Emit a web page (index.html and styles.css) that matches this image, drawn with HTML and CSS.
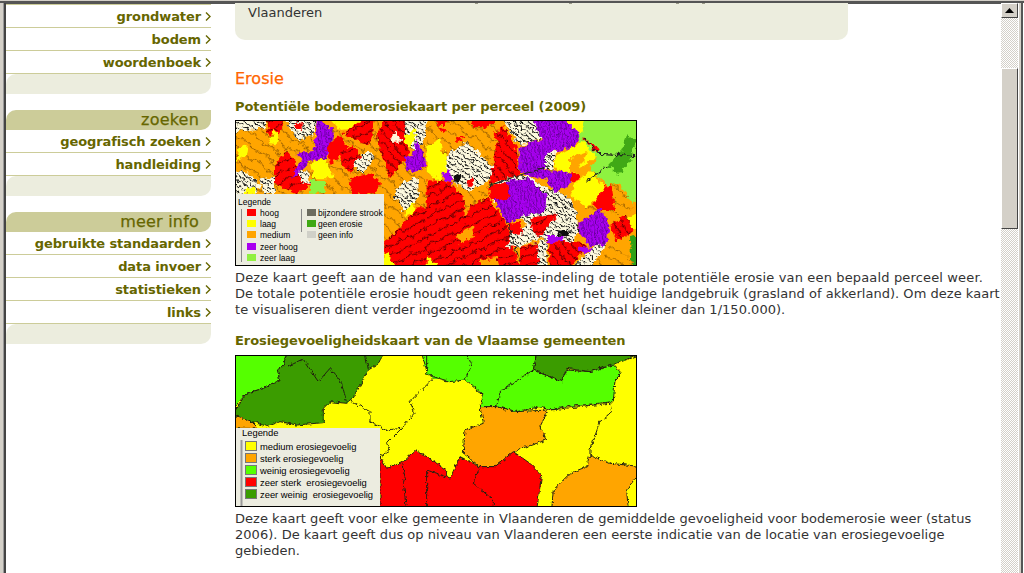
FILE: index.html
```html
<!DOCTYPE html>
<html lang="nl">
<head>
<meta charset="utf-8">
<title>Erosie</title>
<link rel="stylesheet" href="styles.css">
</head>
<body>
<svg class="defs" width="0" height="0" aria-hidden="true">
  <defs>
    <filter id="rough" x="-5%" y="-5%" width="110%" height="110%"><feTurbulence type="fractalNoise" baseFrequency=".07" numOctaves="2" seed="4"/><feDisplacementMap in="SourceGraphic" scale="22" xChannelSelector="R" yChannelSelector="G"/></filter>
    <filter id="jag" x="-5%" y="-5%" width="110%" height="110%"><feTurbulence type="fractalNoise" baseFrequency=".09" numOctaves="2" seed="7"/><feDisplacementMap in="SourceGraphic" scale="14" xChannelSelector="R" yChannelSelector="G"/></filter>
    <pattern id="red" width="60" height="52" patternUnits="userSpaceOnUse" patternTransform="rotate(-25)"><rect width="60" height="52" fill="#f00"/><path d="M0 13Q15 5 30 13T60 13M0 39Q15 31 30 39T60 39" fill="none" stroke="#300" stroke-width="2.600"/></pattern>
    <pattern id="red2" width="60" height="44" patternUnits="userSpaceOnUse" patternTransform="rotate(50)"><rect width="60" height="44" fill="#f00"/><path d="M0 11Q15 3 30 11T60 11M0 33Q15 25 30 33T60 33" fill="none" stroke="#300" stroke-width="2.600"/></pattern>
    <pattern id="org" width="70" height="30" patternUnits="userSpaceOnUse" patternTransform="rotate(35)"><rect width="70" height="30" fill="#ffa500"/><path d="M0 10Q18 0 35 10T70 10" fill="none" stroke="#442200" stroke-width="1.800"/></pattern>
    <pattern id="pur" width="30" height="11" patternUnits="userSpaceOnUse" patternTransform="rotate(80)"><rect width="30" height="11" fill="#a800f0"/><path d="M0 4Q8 1 15 4T30 4" fill="none" stroke="#300050" stroke-width="1.800"/></pattern>
    <pattern id="wht" width="13" height="13" patternUnits="userSpaceOnUse" patternTransform="rotate(35)"><rect width="13" height="13" fill="#fffbe0"/><path d="M0 4H13" stroke="#111" stroke-width="3"/></pattern>
  </defs>
</svg>
<div class="window">
  <div class="frame-left"></div>
  <div class="page">
    <nav class="sidebar">
      <ul class="menu menu-first">
        <li><a>grondwater<svg class="chev" width="6" height="9" viewBox="0 0 6 9"><path d="M1 .5 5 4.5 1 8.5" /></svg></a></li>
        <li><a>bodem<svg class="chev" width="6" height="9" viewBox="0 0 6 9"><path d="M1 .5 5 4.5 1 8.5" /></svg></a></li>
        <li><a>woordenboek<svg class="chev" width="6" height="9" viewBox="0 0 6 9"><path d="M1 .5 5 4.5 1 8.5" /></svg></a></li>
      </ul>
      <div class="menu-foot"></div>
      <h3 class="menu-head">zoeken</h3>
      <ul class="menu">
        <li><a>geografisch zoeken<svg class="chev" width="6" height="9" viewBox="0 0 6 9"><path d="M1 .5 5 4.5 1 8.5" /></svg></a></li>
        <li><a>handleiding<svg class="chev" width="6" height="9" viewBox="0 0 6 9"><path d="M1 .5 5 4.5 1 8.5" /></svg></a></li>
      </ul>
      <div class="menu-foot"></div>
      <h3 class="menu-head">meer info</h3>
      <ul class="menu">
        <li><a>gebruikte standaarden<svg class="chev" width="6" height="9" viewBox="0 0 6 9"><path d="M1 .5 5 4.5 1 8.5" /></svg></a></li>
        <li><a>data invoer<svg class="chev" width="6" height="9" viewBox="0 0 6 9"><path d="M1 .5 5 4.5 1 8.5" /></svg></a></li>
        <li><a>statistieken<svg class="chev" width="6" height="9" viewBox="0 0 6 9"><path d="M1 .5 5 4.5 1 8.5" /></svg></a></li>
        <li><a>links<svg class="chev" width="6" height="9" viewBox="0 0 6 9"><path d="M1 .5 5 4.5 1 8.5" /></svg></a></li>
      </ul>
      <div class="menu-foot"></div>
    </nav>
    <main class="content">
      <div class="intro">Vlaanderen</div>
      <h1 class="title">Erosie</h1>
      <h2 class="subtitle">Potentiële bodemerosiekaart per perceel (2009)</h2>
      <svg class="map map-one" width="402" height="146" viewBox="0 0 400 144">
        <rect width="400" height="144" fill="#ffa500"/>
        <g filter="url(#rough)" transform="translate(-6 -6) scale(.3333)">
          <rect x="-10" y="-10" width="660" height="480" fill="url(#org)"/>
          <path fill="url(#wht)" d="M10 10H115L105 40 60 45 10 50Z"/>
          <path fill="url(#red)" d="M115 10H165L150 60 130 65 112 50Z"/>
          <path fill="url(#wht)" d="M165 10H265L250 60 205 75 180 45Z"/>
          <path fill="#f00" d="M190 22 215 20 215 45 195 40Z"/>
          <path fill="#ff0" d="M25 100 50 90 45 125 20 135Z"/>
          <path fill="url(#wht)" d="M10 165 60 175 90 215 80 238H10Z"/>
          <path fill="#ff0" d="M50 220 75 215 80 238H40Z"/>
          <path fill="#ff0" d="M130 45 148 52 140 88 120 85Z"/>
          <path fill="url(#wht)" d="M90 190 135 185 135 238H100Z"/>
          <path fill="url(#red)" d="M135 150 170 105 205 160 240 210 200 236 135 205Z"/>
          <path fill="url(#wht)" d="M205 165 235 170 240 205 215 210Z"/>
          <path fill="url(#pur)" d="M185 192 215 130 200 115 250 108 265 10 312 50 290 128 240 140Z"/>
          <path fill="#ff0" d="M240 145 285 130 312 190 250 190Z"/>
          <path fill="#8ef240" d="M240 195 285 195 285 236H240Z"/>
          <path fill="#f00" d="M290 90 330 62 358 110 320 130 300 150Z"/>
          <path fill="url(#red)" d="M330 110 370 90 395 130 360 170 335 150Z"/>
          <path fill="url(#wht)" d="M370 145 415 105 430 130 395 180Z"/>
          <path fill="#ff0" d="M300 10H400L380 40 330 45Z"/>
          <path fill="url(#red)" d="M340 55 400 10 435 10 420 90 395 85Z"/>
          <path fill="url(#red2)" d="M440 50 470 10H535L535 125 480 190 450 110Z"/>
          <path fill="#fff6d8" d="M480 65 500 48 515 80H490Z"/>
          <path fill="#f00" d="M365 190 420 175 455 205 430 238H360Z"/>
          <path fill="url(#wht)" d="M520 10H640V70L590 60 560 110 530 90Z"/>
          <path fill="url(#pur)" d="M520 125 548 120 560 70 590 150 560 170 530 165Z"/>
          <path fill="#ff0" d="M530 60 560 40 545 95 520 85Z"/>
          <path fill="url(#wht)" d="M520 200 560 190 565 250 520 290 490 235Z"/>
          <path fill="#ff0" d="M530 280 555 260 550 295 525 305Z"/>
          <path fill="url(#red)" d="M460 385 510 340 560 280 640 280V460H460Z"/>
          <path fill="#ff0" d="M460 400 500 460H460Z"/>
        </g>
        <g filter="url(#rough)" transform="translate(194 -6) scale(.3333)">
          <path fill="url(#org)" d="M-10 10H200V110L170 150 100 90 40 120-10 100Z"/>
          <path fill="#f00" d="M20 10H60L50 30 25 30ZM120 10H200L170 38 130 35ZM80 62 100 65 92 85 75 78ZM25 35 50 45 35 55Z"/>
          <path fill="#ff0" d="M-10 95 30 70 40 110 60 150 30 200-10 170Z"/>
          <path fill="url(#wht)" d="M50 120 110 80 190 155 180 195 120 230 80 210 50 170Z"/>
          <path fill="#a800f0" d="M35 175 60 165 65 205 45 195Z"/>
          <path fill="#111" d="M70 185 95 175 90 205 70 200Z"/>
          <path fill="#f00" d="M105 195 130 190 130 212 110 212Z"/>
          <path fill="url(#red2)" d="M190 130 200 80 190 55 220 30 260 100 270 180 200 200 180 210Z"/>
          <path fill="url(#wht)" d="M215 10H310L340 70 270 90 240 50Z"/>
          <path fill="url(#pur)" d="M310 10H405L460 60 420 100 370 110 345 165 425 170 425 205 375 235 345 190 300 185 270 170 265 100 300 80 335 75Z"/>
          <path fill="url(#wht)" d="M345 115 375 110 370 165 345 160Z"/>
          <path fill="#ff0" d="M405 10H490L460 65 430 40Z"/>
          <path fill="#8ef240" d="M470 10H630V212L610 270 570 225 530 210 480 165 500 125 445 75Z"/>
          <path fill="#40a814" d="M590 60 618 78 600 140 565 180 535 150 575 105Z"/>
          <path fill="#ff0" d="M420 100 460 78 500 125 440 165 425 175 375 160 375 125Z"/>
          <path fill="#ffa500" d="M420 130 475 110 440 175 420 170Z"/>
          <path fill="#f00" d="M455 70 480 80 510 105 500 112Z"/>
          <path fill="#f00" d="M425 175 450 175 440 200 420 205Z"/>
          <path fill="#ff0" d="M440 200 480 165 525 215 525 235 470 275 420 240Z"/>
          <path fill="url(#org)" d="M525 215 570 205 610 270 600 290 550 300 530 290 475 290 470 275 530 240Z"/>
          <path fill="#f00" d="M525 215 545 210 555 285 510 285 490 270Z"/>
          <path fill="#ff0" d="M590 310 630 290V340L600 345Z"/>
          <path fill="url(#pur)" d="M445 325 510 280 540 320 530 385 480 395 445 350Z"/>
          <path fill="url(#red2)" d="M540 330 590 300 610 350 560 380Z"/>
          <path fill="#2fa014" d="M600 365 630 360V460H605Z"/>
          <path fill="url(#org)" d="M480 460 550 380 605 440 620 460Z"/>
          <path fill="url(#wht)" d="M200 200 235 190 270 180 300 185 350 220 410 240 440 290 445 345 430 385 350 375 320 365 280 320 235 270 190 260Z"/>
          <path fill="url(#pur)" d="M190 250 235 195 295 190 350 240 345 290 290 300 230 325Z"/>
          <path fill="#f00" d="M170 215 230 205 240 250 185 258Z"/>
          <path fill="url(#red)" d="M-10 195 60 200 105 250 170 240 225 320 240 360 270 460H-10Z"/>
          <path fill="url(#org)" d="M100 240 125 230 180 225 175 250 125 270 105 305Z"/>
          <path fill="#ffa500" d="M80 360 125 335 135 365 90 385Z"/>
          <path fill="#ff0" d="M-10 420 30 460H-10Z"/>
          <path fill="url(#wht)" d="M240 360 300 320 350 360 270 395 230 400Z"/>
          <path fill="url(#red)" d="M300 310 385 295 330 365 310 350Z"/>
          <path fill="#f00" d="M230 325 270 320 280 355 240 358Z"/>
          <path fill="#a800f0" d="M350 360 400 360 400 382 352 385Z"/>
          <path fill="#111" d="M375 345 425 350 415 362 385 358Z"/>
          <path fill="url(#wht)" d="M280 395 350 375 350 460H270Z"/>
          <path fill="url(#red)" d="M270 395 320 385 330 460H270Z"/>
          <path fill="url(#red2)" d="M355 385 440 378 470 395 420 460H360Z"/>
          <path fill="#a800f0" d="M445 395 495 400 490 415 450 410Z"/>
          <path fill="url(#wht)" d="M500 390 530 385 480 460 420 460Z"/>
          <path fill="#ffa500" d="M150 435 200 425 210 460H145Z"/>
          <path d="M175 215 270 180 345 160M460 70 510 115 618 122M470 200 535 150M230 320 270 440" fill="none" stroke="#222" stroke-width="3.500"/>
        </g>
        <g class="legend">
          <rect x="0" y="73" width="148" height="71" fill="#ecece0"/>
          <path d="M5.500 88V141M65.500 88V111" stroke="#888" stroke-width="1"/>
          <rect x="11" y="88" width="9" height="7" fill="#f00"/>
          <rect x="11" y="99" width="9" height="7" fill="#ff0"/>
          <rect x="11" y="110" width="9" height="7" fill="#ffa500"/>
          <rect x="11" y="122" width="9" height="7" fill="#a800f0"/>
          <rect x="11" y="133" width="9" height="7" fill="#90f040"/>
          <rect x="71" y="88" width="9" height="7" fill="#6c6c60"/>
          <rect x="71" y="99" width="9" height="7" fill="#40a814"/>
          <rect x="71" y="110" width="9" height="7" fill="#d0d0c8"/>
          <text x="2" y="84">Legende</text>
          <text x="24" y="95">hoog</text>
          <text x="24" y="106">laag</text>
          <text x="24" y="117">medium</text>
          <text x="24" y="129">zeer hoog</text>
          <text x="24" y="140">zeer laag</text>
          <text x="82" y="95">bijzondere strook</text>
          <text x="82" y="106">geen erosie</text>
          <text x="82" y="117">geen info</text>
        </g>
      </svg>
      <p class="text"><span class="wide">Deze kaart geeft aan de hand van een klasse-indeling de totale potentiële erosie van een bepaald perceel weer.</span><br>De totale potentiële erosie houdt geen rekening met het huidige landgebruik (grasland of akkerland). Om deze kaart<br>te visualiseren dient verder ingezoomd in te worden (schaal kleiner dan 1/150.000).</p>
      <h2 class="subtitle subtitle-next">Erosiegevoeligheidskaart van de Vlaamse gemeenten</h2>
      <svg class="map map-two" width="402" height="152" viewBox="0 0 400 150">
        <rect width="400" height="150" fill="#ff0"/>
        <g filter="url(#jag)" stroke="#221" stroke-width="3" stroke-linejoin="round" transform="translate(-6 -6) scale(.3333)">
          <path fill="#5f0" d="M10 10H170L185 50 160 45 145 60 150 90 100 115 50 130 10 175Z"/>
          <path fill="#ffa500" d="M10 190 60 210 85 235H10Z"/>
          <path fill="#3a9c00" d="M18 178 50 130 100 115 150 92 142 60 160 45 170 10H465L440 45 415 60 365 150 350 160 300 155 280 175 280 218 200 225 150 215 110 230 60 212 10 195Z"/>
          <path fill="none" d="M175 48 220 28 265 95 300 55 335 100 350 155M405 10 415 58"/>
          <path fill="none" d="M365 155 420 185 420 215 470 240 515 235 470 280 480 300 450 320M610 85 540 155 555 190 515 235"/>
          <path fill="#5f0" d="M575 10H650V85L610 85 590 60Z"/>
          <path fill="#f00" d="M450 320 470 355 520 335 560 300 650 360V480H450Z"/>
          <path fill="none" d="M515 340 525 380 520 400 530 480"/>
        </g>
        <g filter="url(#jag)" stroke="#221" stroke-width="3" stroke-linejoin="round" transform="translate(194 -6) scale(.3333)">
          <path fill="#5f0" d="M-10 10H320L310 60 395 95 410 60 480 65 550 45 575 70 555 90 550 155 410 170 360 180 330 170 260 185 200 170 150 170 160 135 105 90 60 95 10 80-10 70Z"/>
          <path fill="#3a9c00" d="M320 10H640L555 42 480 65 410 55 395 95 310 60Z"/>
          <path fill="#ffa500" d="M150 170 200 170 260 185 355 180 330 230 350 270 260 300 195 350 150 350 100 310 105 240 160 220Z"/>
          <path fill="#f00" d="M-10 360 60 385 90 320 150 350 195 350 250 305 300 340 335 375 320 480H-10Z"/>
          <path fill="none" d="M150 350 130 400 190 450 190 480"/>
          <path fill="#ffa500" d="M370 420 420 370 470 350 480 315 540 340 640 350 590 420 595 480H365Z"/>
          <path fill="none" d="M360 180 540 160 545 185 510 215 480 300 480 315M110 10 125 45 105 90M210 125 200 170M210 125 270 85 310 60"/>
        </g>
        <g class="legend legend-large">
          <rect x="0" y="72" width="144" height="78" fill="#ecece0"/>
          <path d="M5.500 84V150" stroke="#999" stroke-width="2"/>
          <g stroke="#777" stroke-width="1">
            <rect x="9.500" y="85.500" width="11" height="9" fill="#ff0"/>
            <rect x="9.500" y="97.500" width="11" height="9" fill="#ffa500"/>
            <rect x="9.500" y="109.500" width="11" height="9" fill="#5f0"/>
            <rect x="9.500" y="121.500" width="11" height="9" fill="#f00"/>
            <rect x="9.500" y="133.500" width="11" height="9" fill="#3a9c00"/>
          </g>
          <text x="6" y="80">Legende</text>
          <text x="24" y="94">medium erosiegevoelig</text>
          <text x="24" y="106">sterk erosiegevoelig</text>
          <text x="24" y="118">weinig erosiegevoelig</text>
          <text x="24" y="130">zeer sterk  erosiegevoelig</text>
          <text x="24" y="142">zeer weinig  erosiegevoelig</text>
        </g>
      </svg>
      <p class="text">Deze kaart geeft voor elke gemeente in Vlaanderen de gemiddelde gevoeligheid voor bodemerosie weer (status<br>2006). De kaart geeft dus op niveau van Vlaanderen een eerste indicatie van de locatie van erosiegevoelige<br>gebieden.</p>
    </main>
  </div>
  <div class="scrollbar">
    <div class="sb-button"><svg width="9" height="5" viewBox="0 0 9 5"><path d="M4.500 0 9 5H0Z" fill="#000"/></svg></div>
    <div class="sb-track sb-track-top"></div>
    <div class="sb-thumb"></div>
    <div class="sb-track"></div>
  </div>
  <div class="frame-right"></div>
</div>
</body>
</html>
```
FILE: styles.css
```css
* { box-sizing: border-box; }
html, body { margin: 0; height: 100%; overflow: hidden; background: #fff; }
body { font-family: "DejaVu Sans", Verdana, sans-serif; color: #333; }
.defs { position: absolute; }
.window { display: flex; width: 1024px; height: 573px; padding-top: 2px; border-top: 1px solid #d4d0c8; box-shadow: inset 0 3px 0 #555; }
.frame-left { width: 6px; flex: none; background: linear-gradient(90deg, #d4d0c8 0 3px, #999 3px 4px, #444 4px 6px); }
.frame-right { width: 6px; flex: none; background: linear-gradient(90deg, #fff 0 1px, #d4d0c8 1px 3px, #555 3px 5px, #fff 5px 6px); }
.page { flex: 1; min-width: 0; display: flex; overflow: hidden; }
.sidebar { width: 205px; flex: none; padding-top: 1px; }
.menu { list-style: none; margin: 0; padding: 0; }
.menu-first { border-top: 1px solid #cccc99; }
.menu li { height: 23px; border-bottom: 1px solid #cccc99; }
.menu a { display: flex; justify-content: flex-end; align-items: center; gap: 4px; height: 22px; font-size: 13px; font-weight: 700; color: #666600; letter-spacing: -.1px; }
.chev { fill: none; stroke: #666600; stroke-width: 1.400; }
.menu-foot { height: 20px; background: #ecedde; border-radius: 10px 0 10px 0; margin-bottom: 16px; }
.menu-head { height: 20px; margin: 0; padding-right: 12px; background: #cccc99; border-radius: 10px 0 10px 0; color: #666600; font-size: 16px; line-height: 20px; font-weight: 400; text-align: right; letter-spacing: .2px; -webkit-text-stroke: .25px #666600; }
.content { flex: 1; min-width: 0; margin-left: 24px; }
.intro { width: 613px; height: 37px; padding: 2px 13px 0; font-size: 13px; line-height: 16px; border-radius: 0 0 10px 10px; background: linear-gradient(#998 0 0) no-repeat 240px 0 / 3px 1px, linear-gradient(#998 0 0) no-repeat 334px 0 / 3px 1px, linear-gradient(#998 0 0) no-repeat 441px 0 / 3px 1px, linear-gradient(#998 0 0) no-repeat 467px 0 / 3px 1px, #ecedde; }
.title { margin: 30px 0 0; font-size: 16px; line-height: 18px; font-weight: 400; color: #ff6600; -webkit-text-stroke: .25px #ff6600; }
.subtitle { margin: 11px 0 0; font-size: 13px; line-height: 16px; font-weight: 700; color: #666600; letter-spacing: -.07px; }
.subtitle-next { margin-top: 15px; }
.map { display: block; margin-top: 5px; border: 1px solid #000; overflow: hidden; }
.map-two { margin-top: 6px; }
.legend text { font-family: "Liberation Sans", Arial, sans-serif; font-size: 8.500px; fill: #000; white-space: pre; }
.legend-large text { font-size: 9.400px; }
.text { margin: 4px 0 0; font-size: 13px; line-height: 16px; letter-spacing: .03px; color: #333; white-space: nowrap; }
.wide { letter-spacing: .15px; }
.scrollbar { width: 17px; flex: none; display: flex; flex-direction: column; }
.sb-button { height: 15px; flex: none; display: flex; align-items: center; justify-content: center; background: #d4d0c8; border: 1px solid; border-color: #fff #444 #444 #fff; }
.sb-track { flex: 1; background-image: repeating-conic-gradient(#d4d0c8 0 25%, #fff 0 50%); background-size: 2px 2px; }
.sb-track-top { flex: 0 0 50px; }
.sb-thumb { height: 161px; flex: none; background: #d4d0c8; border: 1px solid; border-color: #fff #444 #444 #fff; }
```
